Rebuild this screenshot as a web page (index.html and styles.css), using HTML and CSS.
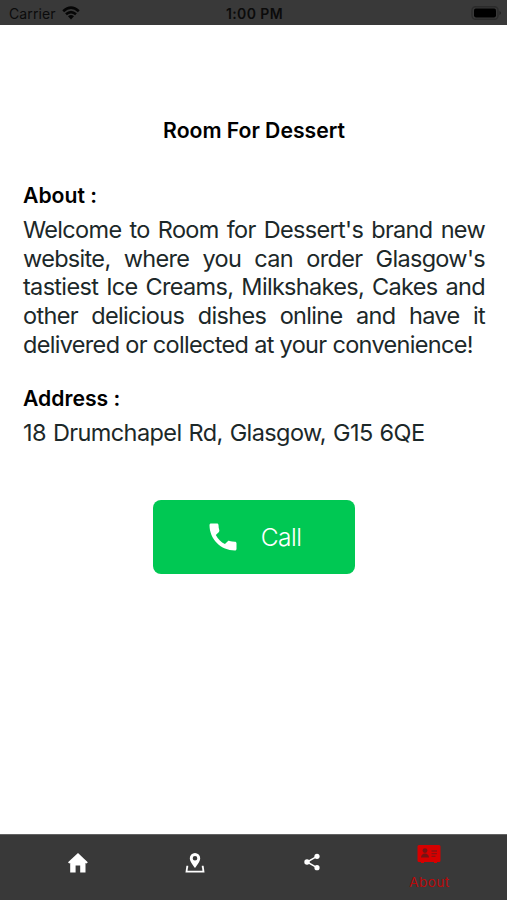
FILE: index.html
```html
<!DOCTYPE html>
<html lang="en">
<head>
<meta charset="utf-8">
<title>Room For Dessert</title>
<link rel="stylesheet" href="styles.css">
</head>
<body>
<header class="status">
  <div class="carrier"><span>Carrier</span>
    <svg width="18" height="14" viewBox="0 0 18 14" fill="none" stroke="#060606" stroke-width="2.6"><path d="M1.2 5.2Q9-2 16.8 5.2M4 8.3Q9 3.9 14 8.3"/><path d="M6 10.3Q9 7.7 12 10.3L9 13.5Z" fill="#060606" stroke="none"/></svg>
  </div>
  <span class="time">1:00 PM</span>
  <svg class="battery" width="31" height="14" viewBox="0 0 31 14"><rect x="1" y=".8" width="26" height="12.4" rx="3.5" fill="none" stroke="#2b2b2b" stroke-width="1.4"/><rect x="3" y="2.6" width="22" height="8.8" rx="1.8" fill="#000"/><path d="M28.5 5q3 2 0 4z" fill="#222"/></svg>
</header>
<main class="content">
  <h1>Room For Dessert</h1>
  <section class="about">
    <h2>About :</h2>
    <p>Welcome to Room for Dessert's brand new website, where you can order Glasgow's tastiest Ice Creams, Milkshakes, Cakes and other delicious dishes online and have it delivered or collected at your convenience!</p>
  </section>
  <section class="address">
    <h2>Address :</h2>
    <p>18 Drumchapel Rd, Glasgow, G15 6QE</p>
  </section>
  <button class="call">
    <svg width="36" height="36" viewBox="0 0 24 24" fill="#fff"><path d="M7.200 10.600c1.300 2.600 3.500 4.800 6.100 6.100l1.900-1.900c.300-.300.700-.400 1.100-.200 1.100.350 2.350.550 3.700.550.550 0 1 .45 1 1V20c0 .55-.45 1-1 1-9.390 0-17-7.610-17-17 0-.55.45-1 1-1h4c.55 0 1 .45 1 1 0 1.250.2 2.450.55 3.570.11.350.03.740-.25 1.020l-2.100 2.010z"/></svg>
    <span>Call</span>
  </button>
</main>
<nav class="tabs">
  <a class="tab"><svg width="20" height="20" viewBox="0 0 20 20" fill="#fff"><path d="M10 0L0 9.300 1.200 10.600 2.200 9.900V19.500H7.600V12.500H12.200V19.500H17.500V9.900L18.700 10.600 19.800 9.300 15.500 5.200Z"/></svg></a>
  <a class="tab"><svg width="20" height="20" viewBox="0 0 20 20"><path fill="#fff" fill-rule="evenodd" d="M10 0a5.200 5.200 0 0 0-5.200 5.200C4.800 8.500 8 12 10 15c2-3 5.200-6.500 5.200-9.800A5.200 5.200 0 0 0 10 0zm0 3a2.300 2.300 0 1 1 0 4.600A2.300 2.300 0 0 1 10 3z"/><path d="M3.200 13.700H2.200L1.500 18.700H18.500L17.800 13.700H16.800" fill="none" stroke="#fff" stroke-width="1.800"/></svg></a>
  <a class="tab"><svg width="18" height="18" viewBox="0 0 18 18"><path d="M14 3.300L4 9l10 5.700" fill="none" stroke="#fff" stroke-width="1.500"/><g fill="#fff"><circle cx="14" cy="3.300" r="2.600"/><circle cx="4" cy="9" r="2.700"/><circle cx="14" cy="14.700" r="2.600"/></g></svg></a>
  <a class="tab active"><svg width="24" height="18" viewBox="0 0 24 18"><path fill="#d60000" d="M2 0h20q1.500 0 1.500 1.500v14q0 1.500-1.500 1.500h-2v1h-3v-1H7v1H4v-1H2Q.5 17 .5 15.500v-14Q.5 0 2 0z"/><g fill="#751414"><circle cx="8" cy="5.600" r="2.400"/><path d="M4 12.500Q4.300 8.800 8 8.500q3.700.3 4 4z"/></g><path d="M14.500 6h5.500M14.500 8.700h5.500M14.500 11.400h4" stroke="#8d1010" stroke-width="1.300"/></svg><span>About</span></a>
</nav>
</body>
</html>
```
FILE: styles.css
```css
* { box-sizing: border-box; }
body {
  margin: 0;
  height: 900px;
  display: flex;
  flex-direction: column;
  background: #fff;
  font-family: Inter, "Liberation Sans", sans-serif;
  color: #1c2829;
}
.status {
  height: 25px;
  flex: none;
  display: grid;
  grid-template-columns: 1fr auto 1fr;
  align-items: center;
  padding: 2px 7px 0 9px;
  background: #393939;
  color: #0b0b0b;
  font-size: 14px;
}
.carrier { display: flex; align-items: center; gap: 6px; letter-spacing: 0.1px; }
.carrier svg { margin-top: -2px; }
.time { font-weight: 600; font-size: 14px; letter-spacing: 0.4px; }
.battery { justify-self: end; margin: -2px -2px 0 0; }
.content {
  flex: 1;
  padding: 92px 22px 0 23px;
  display: flex;
  flex-direction: column;
}
h1, h2 {
  margin: 0;
  font-size: 21.2px;
  line-height: 26px;
  font-weight: 600;
  color: #000;
  letter-spacing: -0.02px;
}
h1 { text-align: center; }
p {
  margin: 8px 0 0;
  font-size: 23.5px;
  line-height: 28.7px;
  letter-spacing: -0.68px;
  text-align: justify;
}
.about { margin-top: 39px; }
.address { margin-top: 25px; }
.address p { letter-spacing: -0.6px; word-spacing: 1px; }
.call {
  width: 202px;
  height: 74px;
  margin: 53px 0 0 130px;
  padding: 0;
  border: 0;
  border-radius: 8px;
  background: #00c853;
  color: #fff;
  font: 300 24.5px Inter, sans-serif;
  letter-spacing: -0.5px;
  display: flex;
  align-items: center;
  justify-content: center;
  gap: 20px;
}
.call svg { margin-left: -2px; }
.tabs {
  height: 66px;
  flex: none;
  display: grid;
  grid-template-columns: repeat(4, 117.3px);
  justify-content: center;
  background: #393939;
  border-top: 1px solid #636363;
}
.tab { display: flex; flex-direction: column; align-items: center; padding-top: 18px; }
.active {
  padding-top: 10px;
  gap: 11px;
  color: #b90909;
  font-size: 13.5px;
  line-height: 17px;
  letter-spacing: 0.5px;
}
```
